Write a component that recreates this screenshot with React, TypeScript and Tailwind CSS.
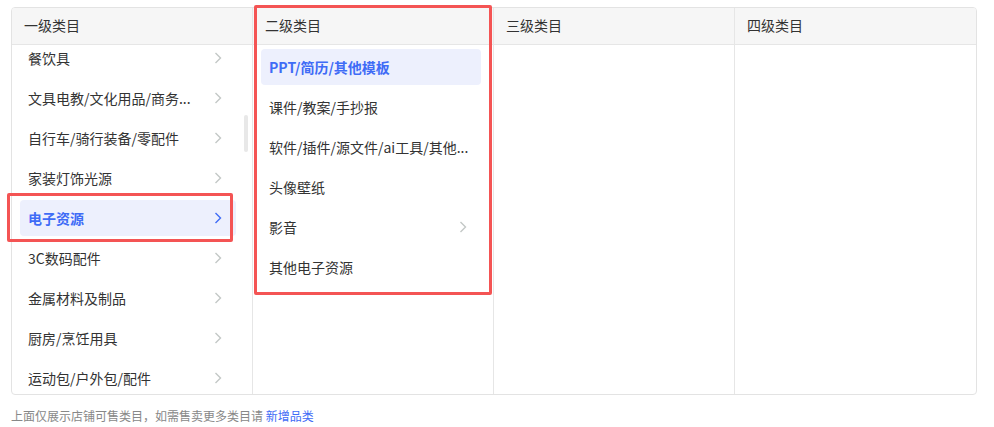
import React from "react";

type Item = { name: string; arrow?: boolean; active?: boolean };

const level1: Item[] = [
  { name: "餐饮具", arrow: true },
  { name: "文具电教/文化用品/商务...", arrow: true },
  { name: "自行车/骑行装备/零配件", arrow: true },
  { name: "家装灯饰光源", arrow: true },
  { name: "电子资源", arrow: true, active: true },
  { name: "3C数码配件", arrow: true },
  { name: "金属材料及制品", arrow: true },
  { name: "厨房/烹饪用具", arrow: true },
  { name: "运动包/户外包/配件", arrow: true },
];

const level2: Item[] = [
  { name: "PPT/简历/其他模板", active: true },
  { name: "课件/教案/手抄报" },
  { name: "软件/插件/源文件/ai工具/其他..." },
  { name: "头像壁纸" },
  { name: "影音", arrow: true },
  { name: "其他电子资源" },
];

const font = {
  fontFamily: '"Microsoft YaHei", "Noto Sans CJK SC", "Noto Sans", sans-serif',
};

function Chevron({ active }: { active?: boolean }) {
  return (
    <svg width="8" height="12" viewBox="0 0 8 12" className="shrink-0">
      <polyline
        points="1.5,1 6.5,6 1.5,11"
        fill="none"
        stroke={active ? "#3f6cf6" : "#c3c8c6"}
        strokeWidth="1.4"
      />
    </svg>
  );
}

function Row({ item }: { item: Item }) {
  return (
    <div
      className={
        "flex items-center justify-between h-[36px] shrink-0 pl-2 pr-[14px] rounded-[4px] text-[14px] " +
        (item.active ? "bg-[#edf0fd] text-[#3f6cf6] font-bold" : "text-[#333]")
      }
    >
      <span className="whitespace-nowrap leading-[20px]">{item.name}</span>
      {item.arrow && <Chevron active={item.active} />}
    </div>
  );
}

function Header({ title }: { title: string }) {
  return (
    <div className="h-[37px] shrink-0 bg-[#f6f6f6] border-b border-[#e6e6e6] flex items-center pl-3 pb-[1px] text-[14px] text-[#333]">
      {title}
    </div>
  );
}

export default function App() {
  return (
    <div className="relative w-[994px] h-[427px] bg-white" style={font}>
      <div className="pt-[7px] pl-[11px] pr-[17px]">
        <div className="grid grid-cols-4 h-[388px] border border-[#e3e3e3] rounded-[4px] overflow-hidden">
          <div className="border-r border-[#e6e6e6] flex flex-col min-w-0">
            <Header title="一级类目" />
            <div className="relative flex-1 overflow-hidden">
              <div className="flex flex-col gap-[4px] pt-[4px] pl-2 pr-4 -mt-[9px]">
                {level1.map((it, i) => (
                  <Row key={i} item={it} />
                ))}
              </div>
              <div className="absolute right-[4px] top-[70px] w-[4px] h-[37px] rounded-full bg-[#e8e8e8]" />
            </div>
          </div>
          <div className="border-r border-[#e6e6e6] flex flex-col min-w-0">
            <Header title="二级类目" />
            <div className="flex flex-col gap-[4px] pt-[4px] pl-2 pr-3">
              {level2.map((it, i) => (
                <Row key={i} item={it} />
              ))}
            </div>
          </div>
          <div className="border-r border-[#e6e6e6] flex flex-col min-w-0">
            <Header title="三级类目" />
          </div>
          <div className="flex flex-col min-w-0">
            <Header title="四级类目" />
          </div>
        </div>
      </div>
      <div className="pl-[11px] pt-[12px] text-[12px] leading-[18px] text-[#888]">
        上面仅展示店铺可售类目，如需售卖更多类目请 <span className="text-[#3f6cf6]">新增品类</span>
      </div>
      <div className="absolute left-[7px] top-[193px] w-[226px] h-[49px] border-[3px] border-[#f45454] rounded-[2px]" />
      <div className="absolute left-[254px] top-[5px] w-[238px] h-[290px] border-[3px] border-[#f45454] rounded-[2px]" />
    </div>
  );
}
